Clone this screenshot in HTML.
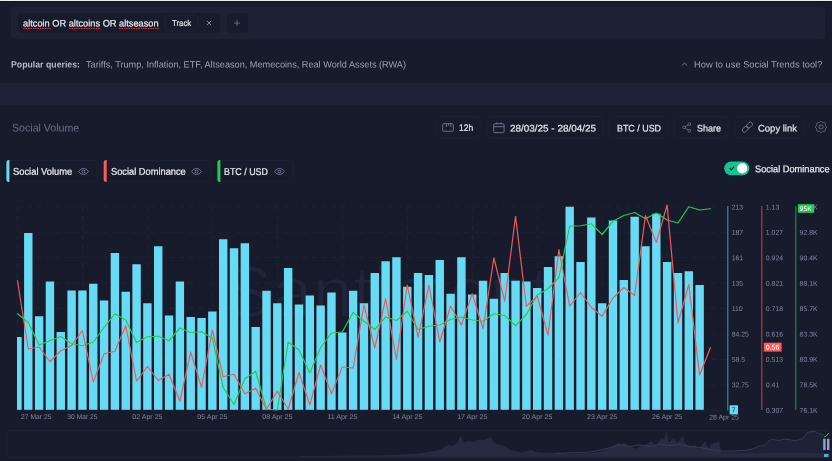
<!DOCTYPE html>
<html lang="en"><head><meta charset="utf-8"><title>Social Trends</title>
<style>
html,body{margin:0;padding:0}
body{width:832px;height:461px;overflow:hidden;background:#181b2b;font-family:"Liberation Sans",sans-serif;position:relative}
.topline{position:absolute;left:0;top:0;width:832px;height:2px;background:#0f111d;border-top:1px solid #ededf0;box-sizing:border-box}
.box,.t,.ic,.chart{position:absolute}
.t{white-space:nowrap;transform-origin:0 0}
.layer{position:absolute;left:0;top:0;width:832px;height:461px;will-change:transform}
.chart{left:0;top:0}
svg text{font-family:"Liberation Sans",sans-serif}
</style></head><body>
<div class="topline"></div>
<div class="layer">
<div class="box" style="left:11px;top:7px;width:814px;height:32px;background:#1e2134;border-radius:4px"></div>
<div class="box" style="left:18px;top:12.7px;width:202px;height:20.4px;background:#181b2b;border-radius:3px"></div>
<span class="t" style="left:23.00px;top:12px;font-size:9.4px;line-height:21px;transform:translateY(0.40px) rotate(0.03deg) scaleX(0.9860);color:#e4e6ee;-webkit-text-stroke:0.22px #e4e6ee;">altcoin OR altcoins OR altseason</span>
<svg class="ic" style="left:0;top:26px" width="170" height="5" viewBox="0 0 170 5"><line x1="23.2" x2="50.8" y1="2.5" y2="2.5" stroke="#e5343f" stroke-width="1" stroke-dasharray="1.5 0.9"/><line x1="69.2" x2="100.6" y1="2.5" y2="2.5" stroke="#e5343f" stroke-width="1" stroke-dasharray="1.5 0.9"/><line x1="119" x2="159" y1="2.5" y2="2.5" stroke="#e5343f" stroke-width="1" stroke-dasharray="1.5 0.9"/></svg>
<span class="t" style="left:172.00px;top:12px;font-size:8.6px;line-height:20px;transform:translateY(0.90px) rotate(0.03deg) scaleX(0.9112);color:#e8e9f0;-webkit-text-stroke:0.15px #e8e9f0;">Track</span>
<svg class="ic" style="left:204px;top:18px" width="10" height="10" viewBox="204 18 10 10"><path d="M206.9 20.8L211.3 25.2M211.3 20.8L206.9 25.2" stroke="#9096b0" stroke-width="0.95" fill="none"/></svg>
<div class="box" style="left:227px;top:12.7px;width:20.5px;height:20.4px;background:#181b2b;border-radius:3px"></div>
<svg class="ic" style="left:232px;top:18px" width="10" height="10" viewBox="232 18 10 10"><path d="M237 20.2V26M234.1 23.1H239.9" stroke="#666c88" stroke-width="0.95" fill="none"/></svg>
<span class="t" style="left:11.00px;top:54px;font-size:9.1px;line-height:20px;transform:translateY(0.40px) rotate(0.03deg) scaleX(0.9609);color:#b4b8cc;font-weight:bold;">Popular queries:</span>
<span class="t" style="left:86.00px;top:54px;font-size:9.2px;line-height:20px;transform:translateY(0.40px) rotate(0.03deg) scaleX(0.9976);color:#9ca1ba;">Tariffs, Trump, Inflation, ETF, Altseason, Memecoins, Real World Assets (RWA)</span>
<svg class="ic" style="left:680px;top:60px" width="9" height="8" viewBox="680 60 9 8"><path d="M681.8 65.6L684.4 63L687 65.6" stroke="#7f85a2" stroke-width="0.85" fill="none"/></svg>
<span class="t" style="left:693.50px;top:54px;font-size:9.2px;line-height:20px;transform:translateY(0.50px) rotate(0.03deg) scaleX(1.0132);color:#9ca1ba;">How to use Social Trends tool?</span>
<div class="box" style="left:0;top:83px;width:832px;height:22px;background:#1f2236"></div>
<span class="t" style="left:11.80px;top:116px;font-size:11.1px;line-height:22px;transform:translateY(0.60px) rotate(0.03deg) scaleX(0.9567);color:#686e8a;">Social Volume</span>
<span class="t" style="left:459.00px;top:117px;font-size:9.5px;line-height:21px;transform:translateY(0.40px) rotate(0.03deg) scaleX(0.8958);color:#e4e6ee;-webkit-text-stroke:0.2px #e4e6ee;">12h</span>
<span class="t" style="left:510.00px;top:117px;font-size:9.5px;line-height:21px;transform:translateY(0.40px) rotate(0.03deg) scaleX(1.0437);color:#e4e6ee;-webkit-text-stroke:0.2px #e4e6ee;">28/03/25 - 28/04/25</span>
<span class="t" style="left:616.50px;top:117px;font-size:9.5px;line-height:21px;transform:translateY(0.40px) rotate(0.03deg) scaleX(0.9366);color:#e4e6ee;-webkit-text-stroke:0.2px #e4e6ee;">BTC / USD</span>
<span class="t" style="left:697.00px;top:117px;font-size:9.5px;line-height:21px;transform:translateY(0.40px) rotate(0.03deg) scaleX(0.9467);color:#e4e6ee;-webkit-text-stroke:0.2px #e4e6ee;">Share</span>
<span class="t" style="left:758.00px;top:117px;font-size:9.5px;line-height:21px;transform:translateY(0.40px) rotate(0.03deg) scaleX(0.9981);color:#e4e6ee;-webkit-text-stroke:0.2px #e4e6ee;">Copy link</span>
<svg class="ic" style="left:442px;top:123px" width="12" height="9" viewBox="0 0 12 9"><rect x="0.7" y="0.7" width="10.6" height="7.5" rx="0.9" fill="none" stroke="#747a97" stroke-width="0.9"/><path d="M4.4 0.8V4.2M6.6 0.8V2.6M8.8 0.8V4.2" stroke="#747a97" stroke-width="0.9"/></svg>
<svg class="ic" style="left:493px;top:122px" width="12" height="12" viewBox="0 0 12 12"><rect x="0.7" y="1.7" width="10.4" height="9" rx="1.4" fill="none" stroke="#747a97" stroke-width="0.9"/><path d="M0.7 4.7H11.1M3.7 0.4V2.4M8.1 0.4V2.4" stroke="#747a97" stroke-width="0.9" fill="none"/></svg>
<svg class="ic" style="left:681.5px;top:122px" width="10" height="11" viewBox="0 0 10 11"><g fill="none" stroke="#747a97" stroke-width="0.8"><circle cx="7.3" cy="2.2" r="1.35"/><circle cx="2.2" cy="5.4" r="1.35"/><circle cx="7.3" cy="8.7" r="1.35"/><path d="M3.4 4.7L6.1 3M3.4 6.1L6.1 7.9"/></g></svg>
<svg class="ic" style="left:741px;top:121px" width="13" height="13" viewBox="0 0 13 13"><g fill="none" stroke="#747a97" stroke-width="0.9"><rect x="-3.4" y="-2.1" width="6.8" height="4.2" rx="2.1" transform="translate(8.5 4.1) rotate(-45)"/><rect x="-3.4" y="-2.1" width="6.8" height="4.2" rx="2.1" transform="translate(4.4 8.2) rotate(-45)"/></g></svg>
<svg class="ic" style="left:814.75px;top:121.1px" width="12" height="12" viewBox="0 0 12 12"><g fill="none" stroke="#747a97" stroke-width="0.85" stroke-linejoin="round"><circle cx="6" cy="6" r="2.05"/><path d="M6.00 0.30 L6.37 0.39 L6.71 0.62 L7.00 0.95 L7.26 1.29 L7.50 1.57 L7.76 1.75 L8.07 1.81 L8.44 1.78 L8.86 1.72 L9.30 1.70 L9.71 1.77 L10.03 1.97 L10.23 2.29 L10.30 2.70 L10.28 3.14 L10.22 3.56 L10.19 3.93 L10.25 4.24 L10.43 4.50 L10.71 4.74 L11.05 5.00 L11.38 5.29 L11.61 5.63 L11.70 6.00 L11.61 6.37 L11.38 6.71 L11.05 7.00 L10.71 7.26 L10.43 7.50 L10.25 7.76 L10.19 8.07 L10.22 8.44 L10.28 8.86 L10.30 9.30 L10.23 9.71 L10.03 10.03 L9.71 10.23 L9.30 10.30 L8.86 10.28 L8.44 10.22 L8.07 10.19 L7.76 10.25 L7.50 10.43 L7.26 10.71 L7.00 11.05 L6.71 11.38 L6.37 11.61 L6.00 11.70 L5.63 11.61 L5.29 11.38 L5.00 11.05 L4.74 10.71 L4.50 10.43 L4.24 10.25 L3.93 10.19 L3.56 10.22 L3.14 10.28 L2.70 10.30 L2.29 10.23 L1.97 10.03 L1.77 9.71 L1.70 9.30 L1.72 8.86 L1.78 8.44 L1.81 8.07 L1.75 7.76 L1.57 7.50 L1.29 7.26 L0.95 7.00 L0.62 6.71 L0.39 6.37 L0.30 6.00 L0.39 5.63 L0.62 5.29 L0.95 5.00 L1.29 4.74 L1.57 4.50 L1.75 4.24 L1.81 3.93 L1.78 3.56 L1.72 3.14 L1.70 2.70 L1.77 2.29 L1.97 1.97 L2.29 1.77 L2.70 1.70 L3.14 1.72 L3.56 1.78 L3.93 1.81 L4.24 1.75 L4.50 1.57 L4.74 1.29 L5.00 0.95 L5.29 0.62 L5.63 0.39Z"/></g></svg>
<span class="t" style="left:13.20px;top:160px;font-size:9.8px;line-height:21px;transform:translateY(0.70px) rotate(0.03deg) scaleX(0.9548);color:#eceef4;-webkit-text-stroke:0.2px #eceef4;">Social Volume</span>
<svg class="ic" style="left:77.60px;top:167.90px" width="11" height="7" viewBox="0 0 11 7"><path d="M0.6 3.5C2 1.4 3.7 0.55 5.5 0.55S9 1.4 10.4 3.5C9 5.6 7.3 6.45 5.5 6.45S2 5.6 0.6 3.5z" fill="none" stroke="#787e9b" stroke-width="0.9"/><circle cx="5.5" cy="3.5" r="1.45" fill="none" stroke="#787e9b" stroke-width="0.9"/></svg>
<span class="t" style="left:110.70px;top:160px;font-size:9.8px;line-height:21px;transform:translateY(0.70px) rotate(0.03deg) scaleX(0.9470);color:#eceef4;-webkit-text-stroke:0.2px #eceef4;">Social Dominance</span>
<svg class="ic" style="left:191.10px;top:167.90px" width="11" height="7" viewBox="0 0 11 7"><path d="M0.6 3.5C2 1.4 3.7 0.55 5.5 0.55S9 1.4 10.4 3.5C9 5.6 7.3 6.45 5.5 6.45S2 5.6 0.6 3.5z" fill="none" stroke="#787e9b" stroke-width="0.9"/><circle cx="5.5" cy="3.5" r="1.45" fill="none" stroke="#787e9b" stroke-width="0.9"/></svg>
<span class="t" style="left:224.00px;top:160px;font-size:9.8px;line-height:21px;transform:translateY(0.70px) rotate(0.03deg) scaleX(0.9080);color:#eceef4;-webkit-text-stroke:0.2px #eceef4;">BTC / USD</span>
<svg class="ic" style="left:273.60px;top:167.90px" width="11" height="7" viewBox="0 0 11 7"><path d="M0.6 3.5C2 1.4 3.7 0.55 5.5 0.55S9 1.4 10.4 3.5C9 5.6 7.3 6.45 5.5 6.45S2 5.6 0.6 3.5z" fill="none" stroke="#787e9b" stroke-width="0.9"/><circle cx="5.5" cy="3.5" r="1.45" fill="none" stroke="#787e9b" stroke-width="0.9"/></svg>
<svg class="ic" style="left:0;top:0" width="832" height="200" viewBox="0 0 832 200"><rect x="6.4" y="160.3" width="90.8" height="21.6" rx="3" fill="none" stroke="#202438" stroke-width="0.7"/><path d="M9.4 160H8.9a2.5 2.5 0 0 0 -2.5 2.5v17a2.5 2.5 0 0 0 2.5 2.5h0.5z" fill="#68dbf4"/><rect x="103.7" y="160.3" width="107.19999999999999" height="21.6" rx="3" fill="none" stroke="#202438" stroke-width="0.7"/><path d="M106.7 160H106.2a2.5 2.5 0 0 0 -2.5 2.5v17a2.5 2.5 0 0 0 2.5 2.5h0.5z" fill="#ff5b5b"/><rect x="217.4" y="160.3" width="75.8" height="21.6" rx="3" fill="none" stroke="#202438" stroke-width="0.7"/><path d="M220.4 160H219.9a2.5 2.5 0 0 0 -2.5 2.5v17a2.5 2.5 0 0 0 2.5 2.5h0.5z" fill="#26c953"/><rect x="435.4" y="116.4" width="44.800000000000026" height="21.6" rx="4" fill="none" stroke="#1f2337" stroke-width="0.8"/><rect x="487.0" y="116.4" width="116.2" height="21.6" rx="4" fill="none" stroke="#1f2337" stroke-width="0.8"/><rect x="609.4" y="116.4" width="58.800000000000026" height="21.6" rx="4" fill="none" stroke="#1f2337" stroke-width="0.8"/><rect x="674.0" y="116.4" width="54.2" height="21.6" rx="4" fill="none" stroke="#1f2337" stroke-width="0.8"/><rect x="735.0" y="116.4" width="68.80000000000003" height="21.6" rx="4" fill="none" stroke="#1f2337" stroke-width="0.8"/><rect x="165.1" y="15.2" width="33.1" height="15.5" rx="3.5" fill="none" stroke="#22263b" stroke-width="0.7"/></svg>
<svg class="ic" style="left:720px;top:158px" width="34" height="22" viewBox="720 158 34 22"><rect x="724.2" y="161.5" width="25.1" height="13.7" rx="6.85" fill="#14c393"/><circle cx="742.2" cy="168.4" r="5.1" fill="#fff"/><path d="M729.7 168.2L731.3 169.9L734.1 166.6" stroke="#0c2a1c" stroke-width="1.15" fill="none"/></svg>
<span class="t" style="left:754.60px;top:158px;font-size:9.8px;line-height:21px;transform:translateY(0.20px) rotate(0.03deg) scaleX(0.9445);color:#eceef4;-webkit-text-stroke:0.2px #eceef4;">Social Dominance</span>
<svg class="chart" width="832" height="461" viewBox="0 0 832 461">
<text x="224" y="317" font-size="72" fill="#21253b" stroke="#181b2b" stroke-width="1.6" textLength="326" lengthAdjust="spacingAndGlyphs">Santiment</text>
<line x1="17.5" x2="727" y1="206.70" y2="206.70" stroke="#22263a" stroke-width="0.8" stroke-dasharray="5 4.5"/>
<line x1="17.5" x2="727" y1="232.15" y2="232.15" stroke="#22263a" stroke-width="0.8" stroke-dasharray="5 4.5"/>
<line x1="17.5" x2="727" y1="257.60" y2="257.60" stroke="#22263a" stroke-width="0.8" stroke-dasharray="5 4.5"/>
<line x1="17.5" x2="727" y1="283.05" y2="283.05" stroke="#22263a" stroke-width="0.8" stroke-dasharray="5 4.5"/>
<line x1="17.5" x2="727" y1="308.50" y2="308.50" stroke="#22263a" stroke-width="0.8" stroke-dasharray="5 4.5"/>
<line x1="17.5" x2="727" y1="333.95" y2="333.95" stroke="#22263a" stroke-width="0.8" stroke-dasharray="5 4.5"/>
<line x1="17.5" x2="727" y1="359.40" y2="359.40" stroke="#22263a" stroke-width="0.8" stroke-dasharray="5 4.5"/>
<line x1="17.5" x2="727" y1="384.85" y2="384.85" stroke="#22263a" stroke-width="0.8" stroke-dasharray="5 4.5"/>
<line x1="17.5" x2="727" y1="410.30" y2="410.30" stroke="#22263a" stroke-width="0.8" stroke-dasharray="5 4.5"/>
<line x1="17.50" x2="17.50" y1="206.3" y2="409.8" stroke="#22263a" stroke-width="0.8" stroke-dasharray="5 4.5"/>
<line x1="82.47" x2="82.47" y1="206.3" y2="409.8" stroke="#22263a" stroke-width="0.8" stroke-dasharray="5 4.5"/>
<line x1="147.44" x2="147.44" y1="206.3" y2="409.8" stroke="#22263a" stroke-width="0.8" stroke-dasharray="5 4.5"/>
<line x1="212.41" x2="212.41" y1="206.3" y2="409.8" stroke="#22263a" stroke-width="0.8" stroke-dasharray="5 4.5"/>
<line x1="277.38" x2="277.38" y1="206.3" y2="409.8" stroke="#22263a" stroke-width="0.8" stroke-dasharray="5 4.5"/>
<line x1="342.35" x2="342.35" y1="206.3" y2="409.8" stroke="#22263a" stroke-width="0.8" stroke-dasharray="5 4.5"/>
<line x1="407.32" x2="407.32" y1="206.3" y2="409.8" stroke="#22263a" stroke-width="0.8" stroke-dasharray="5 4.5"/>
<line x1="472.29" x2="472.29" y1="206.3" y2="409.8" stroke="#22263a" stroke-width="0.8" stroke-dasharray="5 4.5"/>
<line x1="537.26" x2="537.26" y1="206.3" y2="409.8" stroke="#22263a" stroke-width="0.8" stroke-dasharray="5 4.5"/>
<line x1="602.23" x2="602.23" y1="206.3" y2="409.8" stroke="#22263a" stroke-width="0.8" stroke-dasharray="5 4.5"/>
<line x1="667.20" x2="667.20" y1="206.3" y2="409.8" stroke="#22263a" stroke-width="0.8" stroke-dasharray="5 4.5"/>
<clipPath id="cp"><rect x="17.1" y="200" width="700" height="215"/></clipPath><g clip-path="url(#cp)">
<rect x="13.26" y="337.00" width="8.4" height="72.80" fill="#68dbf4"/>
<rect x="24.09" y="233.00" width="8.4" height="176.80" fill="#68dbf4"/>
<rect x="34.92" y="316.25" width="8.4" height="93.55" fill="#68dbf4"/>
<rect x="45.74" y="281.50" width="8.4" height="128.30" fill="#68dbf4"/>
<rect x="56.57" y="332.00" width="8.4" height="77.80" fill="#68dbf4"/>
<rect x="67.40" y="290.50" width="8.4" height="119.30" fill="#68dbf4"/>
<rect x="78.23" y="290.50" width="8.4" height="119.30" fill="#68dbf4"/>
<rect x="89.06" y="283.75" width="8.4" height="126.05" fill="#68dbf4"/>
<rect x="99.88" y="300.50" width="8.4" height="109.30" fill="#68dbf4"/>
<rect x="110.71" y="253.00" width="8.4" height="156.80" fill="#68dbf4"/>
<rect x="121.54" y="291.75" width="8.4" height="118.05" fill="#68dbf4"/>
<rect x="132.37" y="264.25" width="8.4" height="145.55" fill="#68dbf4"/>
<rect x="143.20" y="303.25" width="8.4" height="106.55" fill="#68dbf4"/>
<rect x="154.02" y="246.25" width="8.4" height="163.55" fill="#68dbf4"/>
<rect x="164.85" y="315.50" width="8.4" height="94.30" fill="#68dbf4"/>
<rect x="175.68" y="281.50" width="8.4" height="128.30" fill="#68dbf4"/>
<rect x="186.51" y="317.00" width="8.4" height="92.80" fill="#68dbf4"/>
<rect x="197.34" y="318.00" width="8.4" height="91.80" fill="#68dbf4"/>
<rect x="208.16" y="311.50" width="8.4" height="98.30" fill="#68dbf4"/>
<rect x="218.99" y="239.25" width="8.4" height="170.55" fill="#68dbf4"/>
<rect x="229.82" y="248.25" width="8.4" height="161.55" fill="#68dbf4"/>
<rect x="240.65" y="243.25" width="8.4" height="166.55" fill="#68dbf4"/>
<rect x="251.48" y="327.00" width="8.4" height="82.80" fill="#68dbf4"/>
<rect x="262.30" y="290.75" width="8.4" height="119.05" fill="#68dbf4"/>
<rect x="273.13" y="303.25" width="8.4" height="106.55" fill="#68dbf4"/>
<rect x="283.96" y="268.00" width="8.4" height="141.80" fill="#68dbf4"/>
<rect x="294.79" y="304.50" width="8.4" height="105.30" fill="#68dbf4"/>
<rect x="305.62" y="295.50" width="8.4" height="114.30" fill="#68dbf4"/>
<rect x="316.44" y="305.50" width="8.4" height="104.30" fill="#68dbf4"/>
<rect x="327.27" y="292.50" width="8.4" height="117.30" fill="#68dbf4"/>
<rect x="338.10" y="332.50" width="8.4" height="77.30" fill="#68dbf4"/>
<rect x="348.93" y="290.75" width="8.4" height="119.05" fill="#68dbf4"/>
<rect x="359.76" y="303.25" width="8.4" height="106.55" fill="#68dbf4"/>
<rect x="370.58" y="273.00" width="8.4" height="136.80" fill="#68dbf4"/>
<rect x="381.41" y="261.25" width="8.4" height="148.55" fill="#68dbf4"/>
<rect x="392.24" y="257.25" width="8.4" height="152.55" fill="#68dbf4"/>
<rect x="403.07" y="286.75" width="8.4" height="123.05" fill="#68dbf4"/>
<rect x="413.90" y="273.00" width="8.4" height="136.80" fill="#68dbf4"/>
<rect x="424.72" y="275.00" width="8.4" height="134.80" fill="#68dbf4"/>
<rect x="435.55" y="260.00" width="8.4" height="149.80" fill="#68dbf4"/>
<rect x="446.38" y="293.75" width="8.4" height="116.05" fill="#68dbf4"/>
<rect x="457.21" y="257.25" width="8.4" height="152.55" fill="#68dbf4"/>
<rect x="468.04" y="294.50" width="8.4" height="115.30" fill="#68dbf4"/>
<rect x="478.86" y="280.75" width="8.4" height="129.05" fill="#68dbf4"/>
<rect x="489.69" y="298.75" width="8.4" height="111.05" fill="#68dbf4"/>
<rect x="500.52" y="273.00" width="8.4" height="136.80" fill="#68dbf4"/>
<rect x="511.35" y="280.75" width="8.4" height="129.05" fill="#68dbf4"/>
<rect x="522.18" y="281.50" width="8.4" height="128.30" fill="#68dbf4"/>
<rect x="533.00" y="288.00" width="8.4" height="121.80" fill="#68dbf4"/>
<rect x="543.83" y="267.00" width="8.4" height="142.80" fill="#68dbf4"/>
<rect x="554.66" y="256.25" width="8.4" height="153.55" fill="#68dbf4"/>
<rect x="565.49" y="206.75" width="8.4" height="203.05" fill="#68dbf4"/>
<rect x="576.32" y="262.00" width="8.4" height="147.80" fill="#68dbf4"/>
<rect x="587.14" y="217.50" width="8.4" height="192.30" fill="#68dbf4"/>
<rect x="597.97" y="303.25" width="8.4" height="106.55" fill="#68dbf4"/>
<rect x="608.80" y="220.50" width="8.4" height="189.30" fill="#68dbf4"/>
<rect x="619.63" y="280.00" width="8.4" height="129.80" fill="#68dbf4"/>
<rect x="630.46" y="216.75" width="8.4" height="193.05" fill="#68dbf4"/>
<rect x="641.28" y="246.25" width="8.4" height="163.55" fill="#68dbf4"/>
<rect x="652.11" y="213.75" width="8.4" height="196.05" fill="#68dbf4"/>
<rect x="662.94" y="262.00" width="8.4" height="147.80" fill="#68dbf4"/>
<rect x="673.77" y="273.00" width="8.4" height="136.80" fill="#68dbf4"/>
<rect x="684.60" y="271.25" width="8.4" height="138.55" fill="#68dbf4"/>
<rect x="695.42" y="285.00" width="8.4" height="124.80" fill="#68dbf4"/>
</g>
<polyline points="17.46,313.75 28.29,322.50 39.12,345.00 49.94,340.75 60.77,336.50 71.60,343.75 82.43,345.75 93.26,342.00 104.08,327.50 114.91,313.75 125.74,320.00 136.57,342.50 147.40,336.75 158.22,336.25 169.05,340.75 179.88,328.00 190.71,332.50 201.54,331.75 212.36,338.25 223.19,387.50 234.02,404.50 244.85,378.75 255.68,371.25 266.50,409.25 277.33,410.00 288.16,342.00 298.99,350.00 309.82,373.00 320.64,347.50 331.47,333.00 342.30,332.00 353.13,312.50 363.96,321.25 374.78,329.50 385.61,317.00 396.44,320.50 407.27,311.25 418.10,329.50 428.92,326.25 439.75,325.00 450.58,319.50 461.41,317.00 472.24,320.00 483.06,321.25 493.89,313.75 504.72,315.50 515.55,325.75 526.38,314.50 537.20,295.00 548.03,288.75 558.86,277.50 569.69,226.25 580.52,225.75 591.34,223.75 602.17,234.50 613.00,221.25 623.83,215.50 634.66,212.50 645.48,218.75 656.31,213.00 667.14,220.00 677.97,223.00 688.80,206.75 699.62,210.00 710.45,208.75" fill="none" stroke="#26c953" stroke-width="1.2" stroke-linejoin="round" stroke-linecap="round"/>
<polyline points="17.46,280.50 28.29,349.00 39.12,347.00 49.94,361.75 60.77,350.75 71.60,345.50 82.43,330.50 93.26,382.00 104.08,353.75 114.91,351.25 125.74,325.75 136.57,381.25 147.40,366.50 158.22,380.50 169.05,374.25 179.88,401.25 190.71,352.00 201.54,387.50 212.36,330.00 223.19,376.75 234.02,374.25 244.85,393.75 255.68,388.25 266.50,409.25 277.33,391.00 288.16,409.25 298.99,372.50 309.82,405.00 320.64,365.00 331.47,393.75 342.30,367.00 353.13,368.00 363.96,305.00 374.78,348.00 385.61,298.75 396.44,359.50 407.27,285.00 418.10,337.50 428.92,285.00 439.75,342.00 450.58,306.25 461.41,325.00 472.24,293.75 483.06,328.75 493.89,258.00 504.72,301.25 515.55,216.25 526.38,306.25 537.20,296.25 548.03,335.00 558.86,249.50 569.69,306.25 580.52,292.50 591.34,307.50 602.17,316.25 613.00,298.00 623.83,287.50 634.66,295.50 645.48,215.50 656.31,242.50 667.14,205.00 677.97,323.00 688.80,284.50 699.62,375.00 710.45,347.50" fill="none" stroke="#f0595c" stroke-width="1.2" stroke-linejoin="round" stroke-linecap="round"/>
<line x1="727.8" x2="727.8" y1="206" y2="410.5" stroke="#3f8fa6" stroke-width="1.1"/>
<line x1="761.8" x2="761.8" y1="206" y2="410" stroke="#a8474d" stroke-width="1.1"/>
<line x1="795.8" x2="795.8" y1="206" y2="410" stroke="#238a45" stroke-width="1.1"/>
<text x="731.70" y="209.45" font-size="6.9" fill="#8288a3" transform="rotate(0.03 731.70 209.45)">213</text>
<text x="765.80" y="209.45" font-size="6.9" fill="#8288a3" transform="rotate(0.03 765.80 209.45)">1.13</text>
<text x="799.60" y="209.45" font-size="6.9" fill="#8288a3" transform="rotate(0.03 799.60 209.45)"></text>
<text x="731.70" y="234.85" font-size="6.9" fill="#8288a3" transform="rotate(0.03 731.70 234.85)">187</text>
<text x="765.80" y="234.85" font-size="6.9" fill="#8288a3" transform="rotate(0.03 765.80 234.85)">1.027</text>
<text x="799.60" y="234.85" font-size="6.9" fill="#8288a3" transform="rotate(0.03 799.60 234.85)">92.8K</text>
<text x="731.70" y="260.25" font-size="6.9" fill="#8288a3" transform="rotate(0.03 731.70 260.25)">161</text>
<text x="765.80" y="260.25" font-size="6.9" fill="#8288a3" transform="rotate(0.03 765.80 260.25)">0.924</text>
<text x="799.60" y="260.25" font-size="6.9" fill="#8288a3" transform="rotate(0.03 799.60 260.25)">90.4K</text>
<text x="731.70" y="285.65" font-size="6.9" fill="#8288a3" transform="rotate(0.03 731.70 285.65)">135</text>
<text x="765.80" y="285.65" font-size="6.9" fill="#8288a3" transform="rotate(0.03 765.80 285.65)">0.821</text>
<text x="799.60" y="285.65" font-size="6.9" fill="#8288a3" transform="rotate(0.03 799.60 285.65)">88.1K</text>
<text x="731.70" y="311.05" font-size="6.9" fill="#8288a3" transform="rotate(0.03 731.70 311.05)">110</text>
<text x="765.80" y="311.05" font-size="6.9" fill="#8288a3" transform="rotate(0.03 765.80 311.05)">0.718</text>
<text x="799.60" y="311.05" font-size="6.9" fill="#8288a3" transform="rotate(0.03 799.60 311.05)">85.7K</text>
<text x="731.70" y="336.45" font-size="6.9" fill="#8288a3" transform="rotate(0.03 731.70 336.45)">84.25</text>
<text x="765.80" y="336.45" font-size="6.9" fill="#8288a3" transform="rotate(0.03 765.80 336.45)">0.616</text>
<text x="799.60" y="336.45" font-size="6.9" fill="#8288a3" transform="rotate(0.03 799.60 336.45)">83.3K</text>
<text x="731.70" y="361.85" font-size="6.9" fill="#8288a3" transform="rotate(0.03 731.70 361.85)">58.5</text>
<text x="765.80" y="361.85" font-size="6.9" fill="#8288a3" transform="rotate(0.03 765.80 361.85)">0.513</text>
<text x="799.60" y="361.85" font-size="6.9" fill="#8288a3" transform="rotate(0.03 799.60 361.85)">80.9K</text>
<text x="731.70" y="387.25" font-size="6.9" fill="#8288a3" transform="rotate(0.03 731.70 387.25)">32.75</text>
<text x="765.80" y="387.25" font-size="6.9" fill="#8288a3" transform="rotate(0.03 765.80 387.25)">0.41</text>
<text x="799.60" y="387.25" font-size="6.9" fill="#8288a3" transform="rotate(0.03 799.60 387.25)">78.5K</text>
<text x="765.80" y="412.65" font-size="6.9" fill="#8288a3" transform="rotate(0.03 765.80 412.65)">0.307</text>
<text x="799.60" y="412.65" font-size="6.9" fill="#8288a3" transform="rotate(0.03 799.60 412.65)">76.1K</text>
<text x="805.50" y="209.45" font-size="6.9" fill="#8288a3" transform="rotate(0.03 805.50 209.45)">95K</text>
<rect x="797.9" y="204.2" width="16.3" height="8.6" fill="#26c953"/><text x="799.60" y="210.90" font-size="6.9" fill="#fff" transform="rotate(0.03 799.60 210.90)">95K</text>
<rect x="763.8" y="342.7" width="17.8" height="8.9" fill="#ff5b5b"/><text x="765.80" y="349.60" font-size="6.9" fill="#fff" transform="rotate(0.03 765.80 349.60)">0.56</text>
<rect x="729.8" y="405.5" width="8" height="8.7" fill="#68dbf4"/><text x="731.80" y="412.30" font-size="6.9" fill="#181b2b" transform="rotate(0.03 731.80 412.30)">7</text>
<text x="21.00" y="419.05" font-size="6.9" fill="#8288a3" textLength="30.4" lengthAdjust="spacingAndGlyphs" transform="rotate(0.03 21.00 419.05)">27 Mar 25</text>
<text x="67.35" y="419.05" font-size="6.9" fill="#8288a3" textLength="30.2" lengthAdjust="spacingAndGlyphs" transform="rotate(0.03 67.35 419.05)">30 Mar 25</text>
<text x="132.32" y="419.05" font-size="6.9" fill="#8288a3" textLength="30.2" lengthAdjust="spacingAndGlyphs" transform="rotate(0.03 132.32 419.05)">02 Apr 25</text>
<text x="197.29" y="419.05" font-size="6.9" fill="#8288a3" textLength="30.2" lengthAdjust="spacingAndGlyphs" transform="rotate(0.03 197.29 419.05)">05 Apr 25</text>
<text x="262.26" y="419.05" font-size="6.9" fill="#8288a3" textLength="30.2" lengthAdjust="spacingAndGlyphs" transform="rotate(0.03 262.26 419.05)">08 Apr 25</text>
<text x="327.23" y="419.05" font-size="6.9" fill="#8288a3" textLength="30.2" lengthAdjust="spacingAndGlyphs" transform="rotate(0.03 327.23 419.05)">11 Apr 25</text>
<text x="392.20" y="419.05" font-size="6.9" fill="#8288a3" textLength="30.2" lengthAdjust="spacingAndGlyphs" transform="rotate(0.03 392.20 419.05)">14 Apr 25</text>
<text x="457.17" y="419.05" font-size="6.9" fill="#8288a3" textLength="30.2" lengthAdjust="spacingAndGlyphs" transform="rotate(0.03 457.17 419.05)">17 Apr 25</text>
<text x="522.14" y="419.05" font-size="6.9" fill="#8288a3" textLength="30.2" lengthAdjust="spacingAndGlyphs" transform="rotate(0.03 522.14 419.05)">20 Apr 25</text>
<text x="587.11" y="419.05" font-size="6.9" fill="#8288a3" textLength="30.2" lengthAdjust="spacingAndGlyphs" transform="rotate(0.03 587.11 419.05)">23 Apr 25</text>
<text x="652.08" y="419.05" font-size="6.9" fill="#8288a3" textLength="30.2" lengthAdjust="spacingAndGlyphs" transform="rotate(0.03 652.08 419.05)">26 Apr 25</text>
<text x="709.20" y="419.60" font-size="6.9" fill="#8288a3" textLength="29.7" lengthAdjust="spacingAndGlyphs" transform="rotate(0.03 709.20 419.60)">28 Apr 25</text>
<rect x="729.8" y="405.5" width="8" height="8.7" fill="#68dbf4"/><text x="731.80" y="412.30" font-size="6.9" fill="#181b2b" transform="rotate(0.03 731.80 412.30)">7</text>
<rect x="6.8" y="430.5" width="823" height="27" rx="2" fill="none" stroke="#1f2336" stroke-width="1"/>
<polygon points="300,456 380,455.5 416,453.8 426,452.5 438.5,450 448.5,445 453,446 457,442.5 460.5,436 463.5,442.5 468,441 473.5,442 478,439.5 483.5,440 487,438.5 490.5,437 493,441 496,443.8 503.5,446 511,450 521,452.5 531,450 536,452 541,452.5 556,453 571,453.8 591,453 603.5,451 608,448.5 613.5,446 618.5,442.5 621,444.5 624,442.5 629,446 636.5,448.8 640,446 644,445 648,443.5 651.5,441 654,444 656.5,445 659,441 661.5,438.8 664,440 666.5,431 669,442.5 671.5,440 674,437.5 676,441 678,442.5 680.5,439 683,436 684.5,442 686.5,445 691.5,446 695,445 699,448.8 702,445 705,441 707,446 709,448.8 711.5,444 714,442.5 716.5,443 719,441 721,451 735,452.5 760,453 790,452.5 812,453 829,453.5 829,457.2 300,457.2" fill="#272b41"/>
<polygon points="721,451.2 734,451 749,450 754,448.5 759,446 763,445.5 766.5,443.8 769,441 771.5,438.8 775,440 779,440.5 784,439 789,439.5 794,440.5 799,440 804,437.5 806,434 807.8,432 811,431.8 814,431.2 817,432.5 820,433.8 824,435 824,456 721,456" fill="#1e2236"/>
<polygon points="721,453 760,453.2 790,452.6 812,453 824,453.4 824,457.2 721,457.2" fill="#272b41"/>
<polyline points="556,453.5 590,452 603,449.5 612,447 620,445 630,446.5 640,445 650,446.5 660,444.5 670,445.5 680,444.5 690,446.5 700,447.5 710,449.5 721,451.2 721,451.2 734,451 749,450 754,448.5 759,446 763,445.5 766.5,443.8 769,441 771.5,438.8 775,440 779,440.5 784,439 789,439.5 794,440.5 799,440 804,437.5 806,434 807.8,432 811,431.8 814,431.2 817,432.5 820,433.8 824,435" fill="none" stroke="#363a52" stroke-width="1"/>
<rect x="823.2" y="438.8" width="2.4" height="11.2" fill="#9da1c4"/><rect x="827" y="438.8" width="2.4" height="11.2" fill="#9da1c4"/>
<rect x="824" y="454" width="4.5" height="3" fill="#4fb0c8"/>
<polyline points="824,437 826.5,436 828.5,433" fill="none" stroke="#26c953" stroke-width="1"/>
</svg>
</div>
</body></html>
